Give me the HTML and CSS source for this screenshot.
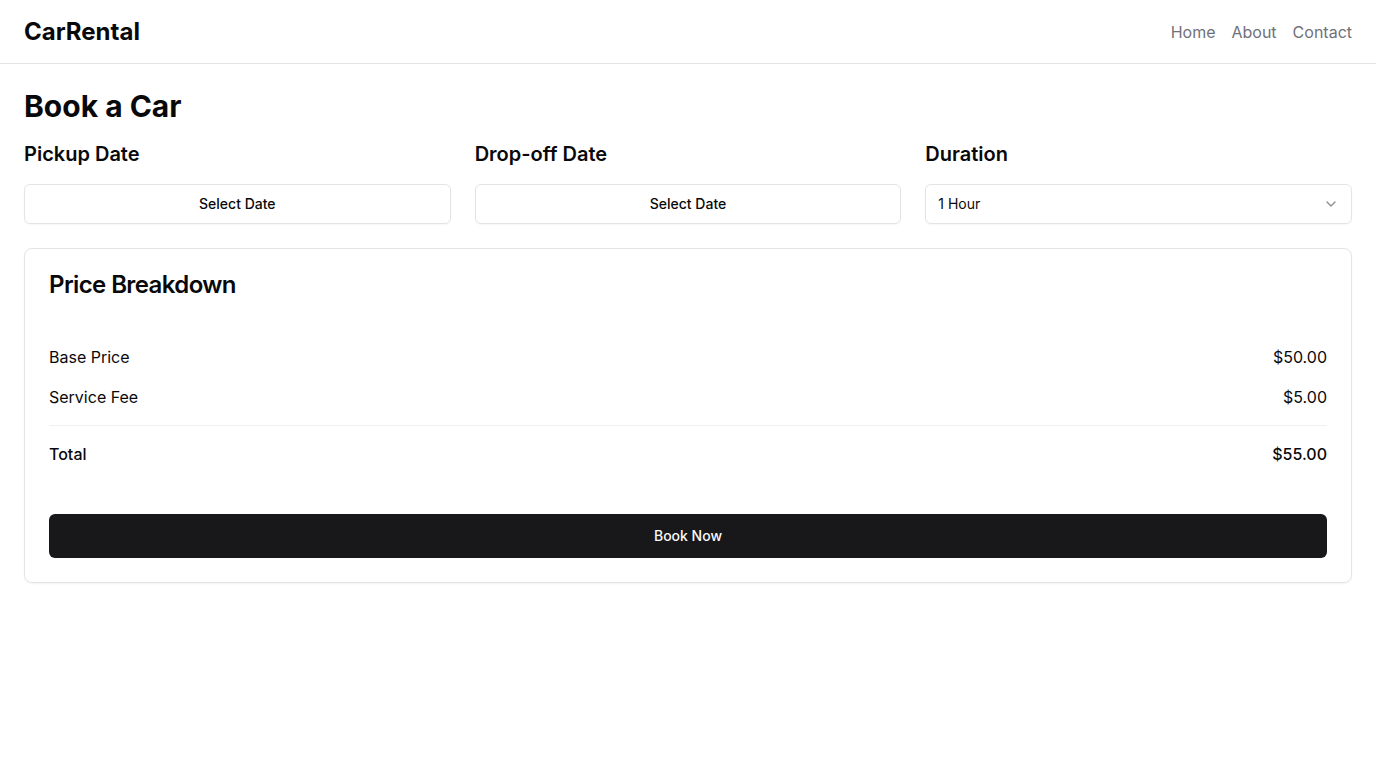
FILE: index.html
```html
<!DOCTYPE html>
<html lang="en">
<head>
<meta charset="utf-8">
<title>CarRental</title>
<link rel="stylesheet" href="styles.css">
</head>
<body>
<header class="site-header">
  <div class="logo">CarRental</div>
  <nav class="nav">
    <a href="#">Home</a>
    <a href="#">About</a>
    <a href="#">Contact</a>
  </nav>
</header>
<main class="main">
  <h1 class="page-title">Book a Car</h1>
  <div class="fields">
    <div class="field">
      <h2 class="field-label">Pickup Date</h2>
      <button class="date-btn">Select Date</button>
    </div>
    <div class="field">
      <h2 class="field-label">Drop-off Date</h2>
      <button class="date-btn">Select Date</button>
    </div>
    <div class="field">
      <h2 class="field-label">Duration</h2>
      <div class="select">
        <span>1 Hour</span>
        <svg class="chev" width="16" height="16" viewBox="0 0 24 24" fill="none" stroke="currentColor" stroke-width="2" stroke-linecap="round" stroke-linejoin="round"><path d="m6 9 6 6 6-6"/></svg>
      </div>
    </div>
  </div>
  <section class="card">
    <h3 class="card-title">Price Breakdown</h3>
    <div class="rows">
      <div class="row"><span>Base Price</span><span>$50.00</span></div>
      <div class="row"><span>Service Fee</span><span>$5.00</span></div>
      <div class="sep"></div>
      <div class="row total"><span>Total</span><span>$55.00</span></div>
    </div>
    <button class="book-btn">Book Now</button>
  </section>
</main>
</body>
</html>
```
FILE: styles.css
```css
* { box-sizing: border-box; }
html, body { margin: 0; padding: 0; }
body {
  font-family: Inter, "Noto Sans", sans-serif;
  color: #09090b;
  background: #fff;
}
.site-header {
  height: 64px;
  border-bottom: 1px solid #e4e4e7;
  display: flex;
  align-items: center;
  justify-content: space-between;
  padding: 0 24px;
}
.logo {
  font-size: 24px;
  font-weight: 700;
  line-height: 32px;
  padding-top: 1px;
}
.nav {
  display: flex;
  gap: 16px;
}
.nav a {
  color: #71717a;
  text-decoration: none;
  font-size: 16px;
  line-height: 24px;
}
.main {
  padding: 24px;
}
.page-title {
  margin: 0 0 16px;
  font-size: 30px;
  line-height: 36px;
  font-weight: 700;
}
.fields {
  display: grid;
  grid-template-columns: repeat(3, 1fr);
  gap: 24px;
}
.field {
  display: flex;
  flex-direction: column;
  gap: 16px;
}
.field-label {
  margin: 0;
  font-size: 20px;
  line-height: 28px;
  font-weight: 600;
}
.date-btn {
  height: 40px;
  border: 1px solid #e4e4e7;
  border-radius: 6px;
  background: #fff;
  font-family: inherit;
  font-size: 14px;
  line-height: 20px;
  font-weight: 500;
  color: #09090b;
  padding: 0 16px 1px;
  box-shadow: 0 1px 2px rgba(0,0,0,0.04);
}
.select {
  height: 40px;
  border: 1px solid #e4e4e7;
  border-radius: 6px;
  display: flex;
  align-items: center;
  justify-content: space-between;
  padding: 0 12px 1px;
  font-size: 14px;
  line-height: 20px;
  box-shadow: 0 1px 2px rgba(0,0,0,0.04);
}
.chev { color: #71717a; opacity: 0.8; }
.card {
  margin-top: 24px;
  border: 1px solid #e4e4e7;
  border-radius: 8px;
  padding: 24px;
  box-shadow: 0 1px 2px rgba(0,0,0,0.05);
}
.card-title {
  margin: 0;
  font-size: 24px;
  line-height: 24px;
  font-weight: 600;
  letter-spacing: -0.6px;
}
.rows {
  margin-top: 48px;
  display: flex;
  flex-direction: column;
  gap: 16px;
}
.row {
  display: flex;
  justify-content: space-between;
  font-size: 16px;
  line-height: 24px;
}
.sep {
  height: 1px;
  background: #f0f0f2;
}
.row.total { font-weight: 500; }
.book-btn {
  margin-top: 48px;
  width: 100%;
  height: 44px;
  border: 0;
  border-radius: 6px;
  background: #18181b;
  color: #fafafa;
  font-family: inherit;
  font-size: 14px;
  line-height: 20px;
  font-weight: 500;
  padding-bottom: 1px;
}
```
